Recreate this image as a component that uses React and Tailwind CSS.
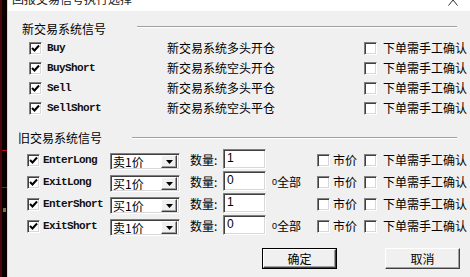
const cjk = { fontFamily: '"Noto Sans CJK SC", "Liberation Sans", sans-serif' };
const mono = { fontFamily: '"Liberation Mono", monospace' };

function CheckBox({ checked }) {
  return (
    <div className="w-[13px] h-[13px] shrink-0 bg-white border border-t-[#808080] border-l-[#808080] border-r-white border-b-white shadow-[inset_1px_1px_0_#404040,inset_-1px_-1px_0_#d8d8d8] flex items-center justify-center">
      {checked && (
        <svg width="9" height="9" viewBox="0 0 9 9">
          <polyline points="1,4 3.5,6.5 8,1.5" fill="none" stroke="#000" strokeWidth="2" />
        </svg>
      )}
    </div>
  );
}

function Sunken({ className, children }) {
  return (
    <div
      className={
        "bg-white border border-t-[#808080] border-l-[#808080] border-r-white border-b-white shadow-[inset_1px_1px_0_#404040,inset_-1px_-1px_0_#d8d8d8] " +
        className
      }
    >
      {children}
    </div>
  );
}

function Combo({ value }) {
  return (
    <Sunken className="w-[70px] h-[17px] self-start mt-[4px] flex items-center pl-[2px] pr-[2px]">
      <span className="text-[12px] leading-[12px] text-black flex-1" style={cjk}>
        {value}
      </span>
      <div className="w-[16px] h-[13px] bg-[#f0f0f0] border border-t-white border-l-white border-r-[#404040] border-b-[#404040] shadow-[inset_-1px_-1px_0_#a0a0a0] flex items-center justify-center">
        <svg width="7" height="4" viewBox="0 0 7 4">
          <polygon points="0,0 7,0 3.5,4" fill="#000" />
        </svg>
      </div>
    </Sunken>
  );
}

function GroupHeader({ label, pl, lineGap, lineTop }) {
  return (
    <div className="flex items-start" style={{ paddingLeft: pl }}>
      <span className="text-[12px] leading-[12px] text-black w-[84px]" style={cjk}>
        {label}
      </span>
      <div
        className="flex-1 mr-[13px] border-t border-t-[#a0a0a0] border-b border-b-white"
        style={{ marginLeft: lineGap, marginTop: lineTop }}
      />
    </div>
  );
}

const newSignals = [
  ["Buy", "新交易系统多头开仓"],
  ["BuyShort", "新交易系统空头开仓"],
  ["Sell", "新交易系统多头平仓"],
  ["SellShort", "新交易系统空头平仓"],
];

const oldSignals = [
  ["EnterLong", "卖1价", "1", false],
  ["ExitLong", "买1价", "0", true],
  ["EnterShort", "买1价", "1", false],
  ["ExitShort", "卖1价", "0", true],
];

function Button({ label, isDefault }) {
  return (
    <div className={"w-[75px] h-[21px] " + (isDefault ? "border border-black" : "")}>
      <div className="w-full h-full bg-[#f0f0f0] border border-t-white border-l-white border-r-[#404040] border-b-[#404040] shadow-[inset_-1px_-1px_0_#a0a0a0] flex items-center justify-center">
        <span className="text-[12px] leading-[12px] text-black" style={cjk}>
          {label}
        </span>
      </div>
    </div>
  );
}

export default function App() {
  return (
    <div className="w-[470px] h-[277px] flex overflow-hidden">
      <div className="w-[7px] h-full bg-[#0a0000] border-l-2 border-l-[#4a0808] flex flex-col">
        <div className="h-[150px]" />
        <div className="h-[1px] bg-[#b01010]" />
        <div className="h-[36px]" />
        <div className="h-[1px] bg-[#b01010]" />
        <div className="h-[20px]" />
        <div className="h-[4px] bg-[#807040] mx-[1px]" />
      </div>
      <div className="flex-1 h-full flex flex-col border-l border-l-[#d8d8d8] bg-[#f0f0f0]">
        <div className="h-[11px] bg-white overflow-hidden flex items-start shrink-0">
          <span className="text-[12px] leading-[12px] text-[#222] ml-[4px] -mt-[7px] whitespace-nowrap" style={cjk}>
            回报交易信号执行选择
          </span>
          <svg className="ml-auto mr-[12px]" width="10" height="6" viewBox="0 0 10 6">
            <path d="M5 0 L0.5 5.5 M5 0 L9.5 5.5" stroke="#333" strokeWidth="1" fill="none" />
          </svg>
        </div>

        <div className="mt-[12px]">
          <GroupHeader label="新交易系统信号" pl={14} lineGap={31} lineTop={3} />
        </div>
        <div className="mt-[3px] flex flex-col">
          {newSignals.map(([name, desc]) => (
            <div key={name} className="h-[20px] flex items-center pl-[21px]">
              <CheckBox checked />
              <span className="ml-[5px] w-[120px] text-[11px] tracking-[-0.6px] font-bold text-[#111]" style={mono}>
                {name}
              </span>
              <span className="w-[197px] text-[12px] leading-[12px] text-black" style={cjk}>
                {desc}
              </span>
              <CheckBox />
              <span className="ml-[6px] text-[12px] leading-[12px] text-black" style={cjk}>
                下单需手工确认
              </span>
            </div>
          ))}
        </div>

        <div className="mt-[14px]">
          <GroupHeader label="旧交易系统信号" pl={10} lineGap={30} lineTop={5} />
        </div>
        <div className="mt-[5px] flex flex-col">
          {oldSignals.map(([name, price, qty, all]) => (
            <div key={name} className="h-[22px] flex items-center pl-[19px]">
              <CheckBox checked />
              <span className="ml-[3px] w-[67px] text-[11px] tracking-[-0.6px] font-bold text-[#111]" style={mono}>
                {name}
              </span>
              <Combo value={price} />
              <span className="ml-[10px] w-[33px] text-[12px] leading-[12px] text-black" style={cjk}>
                数量:
              </span>
              <Sunken className="w-[43px] h-[20px] self-start flex items-start pl-[3px] pt-[2px]">
                <span
                  className="text-[12px] leading-[13px] text-black"
                  style={{ fontFamily: '"Liberation Sans", sans-serif' }}
                >
                  {qty}
                </span>
              </Sunken>
              <span className="ml-[6px] w-[45px] flex items-end text-black" style={cjk}>
                {all && (
                  <>
                    <span className="text-[9px] leading-[11px]" style={{ fontFamily: '"Liberation Sans", sans-serif' }}>0</span>
                    <span className="text-[12px] leading-[12px]">全部</span>
                  </>
                )}
              </span>
              <CheckBox />
              <span className="ml-[3px] text-[12px] leading-[12px] text-black" style={cjk}>
                市价
              </span>
              <div className="ml-[7px]">
                <CheckBox />
              </div>
              <span className="ml-[6px] text-[12px] leading-[12px] text-black" style={cjk}>
                下单需手工确认
              </span>
            </div>
          ))}
        </div>

        <div className="mt-[11px] flex pl-[254px] gap-[48px]">
          <Button label="确定" isDefault />
          <Button label="取消" />
        </div>
      </div>
    </div>
  );
}
